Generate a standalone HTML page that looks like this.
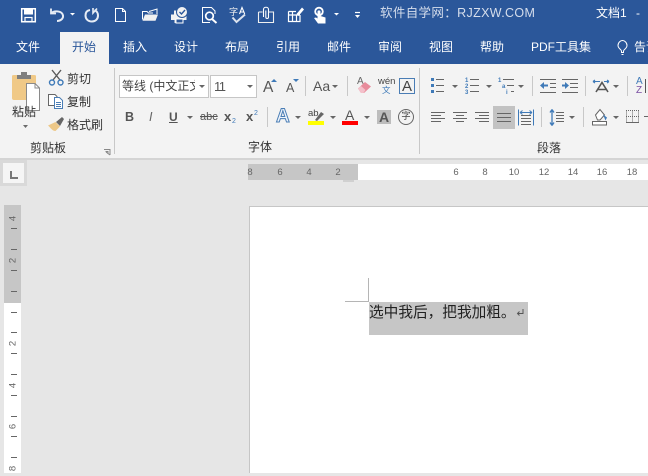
<!DOCTYPE html>
<html lang="zh"><head><meta charset="utf-8"><style>
html,body{margin:0;padding:0}
body{width:648px;height:473px;overflow:hidden;position:relative;background:#e6e6e6;font-family:"Liberation Sans","Noto Sans CJK SC",sans-serif}
.a{position:absolute}
.t{position:absolute;white-space:nowrap;line-height:1}
.tab{position:absolute;top:40px;font-size:12px;line-height:14px;color:#fff;white-space:nowrap}
.sep{position:absolute;width:1px;background:#c8c8c8}
.dd{position:absolute;border:3px solid transparent;border-top:3px solid #666;border-bottom:0}
svg{position:absolute;overflow:visible}
.rh{position:absolute;top:167px;font-size:9.500px;line-height:11px;color:#666;width:16px;text-align:center}
.rv{position:absolute;left:6px;font-size:9.500px;line-height:11px;color:#666;width:14px;text-align:center;transform:rotate(-90deg)}
.tk{position:absolute;left:11px;width:6px;height:1px;background:#666}
</style></head><body>
<div class="a" style="left:0;top:0;width:648px;height:64px;background:#2b579a"></div>
<div class="a" style="left:0;top:64px;width:648px;height:94px;background:#f3f3f3"></div>
<div class="a" style="left:0;top:158px;width:648px;height:2px;background:#d4d4d4"></div>
<div class="a" style="left:60px;top:32px;width:49px;height:32px;background:#f3f3f3"></div>

<!-- QAT -->
<svg style="left:0;top:0" width="365" height="30" viewBox="0 0 365 30" fill="none" stroke="#fff" stroke-width="1.500">
<path d="M21.700 8.700H35.300V21.700H21.700Z"/><path d="M24 8.500H33V14.500H24Z" fill="#fff" stroke="none"/><rect x="25" y="17.500" width="7" height="4" stroke-width="1.200"/>
<path d="M51 8.500V13.500H56" stroke-width="1.800" stroke="#e6ecf5"/><path d="M51.500 13C54 10.500 62 10.500 63 15.500C63.500 19 60 21 57 21" stroke-width="2" stroke="#e6ecf5"/>
<path d="M70 13H75L72.500 15.500Z" fill="#fff" stroke="none"/>
<path d="M90 10C86.500 10.500 85.500 13 85.500 15.500C85.500 19 88 21.500 92 21.500C95.500 21.500 98 19 98 15.500C98 13 96.500 11 94.500 10" stroke-width="2" stroke="#e6ecf5"/><path d="M93 8V13L97 8.500" stroke-width="1.600" stroke="#e6ecf5"/>
<path d="M115.500 8.500H122.500L125.500 11.500V21.500H115.500Z" stroke-width="1"/><path d="M122.500 8.500V11.500H125.500" stroke-width="1"/>
<path d="M142.500 19.500V11.500H147L148.500 13H153" stroke-width="1"/><path d="M142.500 20.800L145 14.500H158L155.500 20.800Z" fill="#f1f1f1" stroke="none"/><path d="M149 11.500L157 9V14" stroke-width="1"/>
<path d="M171 14.500H186.500V20H183.500V23H174.500V20H171Z" fill="#f2f2f2" stroke="none"/><rect x="176" y="19" width="7" height="4" fill="#2b579a" stroke="#fff" stroke-width="1"/><path d="M174 10.500H178V14.500H174Z" fill="#f2f2f2" stroke="none"/><circle cx="182" cy="12" r="5.500" fill="#f2f2f2" stroke="#2b579a" stroke-width="1"/><path d="M179.500 12L181.500 14L185 10" stroke="#2b579a" stroke-width="1.400"/>
<path d="M210 22.500H202.500V7.500H211.500L215 11V14" stroke-width="1"/><circle cx="209.500" cy="16" r="3.800" stroke-width="1.700"/><path d="M212 19L216.500 23" stroke-width="2"/>
<path d="M232.500 17.500L236.500 22L245 14.500" stroke-width="2" stroke="#dce3ee"/>
<path d="M239.500 14L242 7.500L244.700 14M240.500 12H243.500" stroke-width="1.100"/>
<path d="M258.500 12V22.500H273.500V12H269M258.500 12H262.500" stroke-width="1.100" stroke="#f0f0f0"/>
<path d="M263.500 17V9.500C263.500 6.500 268.500 6.500 268.500 9.500V17C268.500 19 265.800 19 265.800 17V10.500" stroke-width="1.100"/>
<path d="M288.500 11.500H296M288.500 11.500V21.500H300V15M292.500 11.500V21.500M296.500 15V21.500M288.500 15H300" stroke-width="1.200"/><path d="M296.500 14L302 7.500L304 9.500L298.500 16Z" fill="#fff" stroke="none"/>
<path d="M318 23.500L314 18L316 17.500L317.500 18.500V11.500C317.500 10 320.500 10 320.500 11.500V16L325.500 17.500V23.500Z" fill="#fff" stroke="none"/><circle cx="319" cy="11.500" r="3.800" stroke-width="1.800"/>
<path d="M334 13H339L336.500 15.500Z" fill="#fff" stroke="none"/>
<path d="M355 12.500H360" stroke-width="1.200"/><path d="M355 15H360L357.500 18Z" fill="#fff" stroke="none"/>
<text x="229" y="15" font-size="9" fill="#f0f0f0" stroke="none" font-family="'Liberation Sans','Noto Sans CJK SC',sans-serif">字</text>
</svg>

<div class="t" style="left:380px;top:6px;font-size:12.500px;line-height:15px;color:#d6deec;letter-spacing:.35px">软件自学网：RJZXW.COM</div>
<div class="t" style="left:596px;top:6px;font-size:12px;line-height:15px;color:#fff">文档1</div>
<div class="t" style="left:636px;top:6px;font-size:12px;line-height:15px;color:#fff">-</div>

<!-- Tabs -->
<div class="tab" style="left:16px">文件</div>
<div class="tab" style="left:72px;color:#2b579a">开始</div>
<div class="tab" style="left:123px">插入</div>
<div class="tab" style="left:174px">设计</div>
<div class="tab" style="left:225px">布局</div>
<div class="tab" style="left:276px">引用</div>
<div class="tab" style="left:327px">邮件</div>
<div class="tab" style="left:378px">审阅</div>
<div class="tab" style="left:429px">视图</div>
<div class="tab" style="left:480px">帮助</div>
<div class="tab" style="left:531px">PDF工具集</div>
<svg style="left:616px;top:40px" width="16" height="16" fill="none" stroke="#fff" stroke-width="1"><path d="M5.500 12.500V11C5.500 9.500 2 8.500 2 5.500C2 2.500 4.500 .5 6.500 .5C8.500 .5 11 2.500 11 5.500C11 8.500 7.500 9.500 7.500 11V12.500ZM5.500 14.500H7.500"/></svg>
<div class="tab" style="left:634px">告诉</div>

<!-- Clipboard group -->
<svg style="left:0;top:65px" width="115" height="95" fill="none">
<path d="M12 11Q12 10 14 10H34Q36 10 36 11V35H14Q12 35 12 33Z" fill="#f0c987"/>
<path d="M17 14V10H21V7H27V10H31V14Z" fill="#7f7f7f"/>
<path d="M26.500 18.500H35L39.500 23V45.500H26.500Z" fill="#fff" stroke="#8a8a8a"/><path d="M35 18.500V23H39.500" stroke="#8a8a8a"/>
<path d="M23 60H28L25.500 63Z" fill="#6a6a6a"/>
<path d="M52 5L60 15M61 5L53 15" stroke="#5a5a5a" stroke-width="1.400"/><circle cx="52" cy="17.500" r="2.500" stroke="#3f7ab8" stroke-width="1.400"/><circle cx="60.500" cy="17.500" r="2.500" stroke="#3f7ab8" stroke-width="1.400"/>
<path d="M48.500 40.500V29.500H55L57 31.500V40.500Z" fill="#fff" stroke="#666"/><path d="M54.500 32.500H59.500L62.500 35.500V43.500H54.500Z" fill="#fff" stroke="#4a7db5"/><path d="M56 37.500H61M56 39.500H61M56 41.500H61" stroke="#4a7db5"/>
<path d="M48 60.500L55.500 57L60 61.500L55.500 66C52 66 50 62 48 60.500Z" fill="#edc888"/><path d="M56 57L62 52L64 54L60 61Z" fill="#666"/>
<path d="M104 84.500H110V90M106 87L110 90M105.500 86.500H108V89" stroke="#888"/>
</svg>
<div class="t" style="left:12px;top:105px;font-size:12px;line-height:14px;color:#333">粘贴</div>
<div class="t" style="left:67px;top:72px;font-size:12px;line-height:14px;color:#333">剪切</div>
<div class="t" style="left:67px;top:95px;font-size:12px;line-height:14px;color:#333">复制</div>
<div class="t" style="left:67px;top:118px;font-size:12px;line-height:14px;color:#333">格式刷</div>
<div class="t" style="left:30px;top:141px;font-size:12px;line-height:14px;color:#333">剪贴板</div>
<div class="sep" style="left:114px;top:68px;height:86px"></div>

<!-- Font group -->
<div class="a" style="left:119px;top:75px;width:88px;height:21px;background:#fff;border:1px solid #c6c6c6"></div>
<div class="t" style="left:122px;top:79px;width:73px;overflow:hidden;font-size:12px;line-height:15px;color:#444">等线 (中文正文</div>
<div class="dd" style="left:199px;top:85px"></div>
<div class="a" style="left:210px;top:75px;width:45px;height:21px;background:#fff;border:1px solid #c6c6c6"></div>
<div class="t" style="left:214px;top:79px;font-size:13px;line-height:15px;color:#555;letter-spacing:-1.500px">11</div>
<div class="dd" style="left:247px;top:85px"></div>

<div class="t" style="left:263px;top:78px;font-size:15.500px;line-height:19px;color:#555">A</div>
<svg style="left:271px;top:79px" width="6" height="4"><path d="M0 3H6L3 0Z" fill="#3f7ab8"/></svg>
<div class="t" style="left:286px;top:80px;font-size:12.500px;line-height:16px;color:#555">A</div>
<svg style="left:293px;top:79px" width="6" height="4"><path d="M0 0H6L3 3Z" fill="#3f7ab8"/></svg>
<div class="sep" style="left:305px;top:76px;height:20px"></div>
<div class="t" style="left:313px;top:78px;font-size:14px;line-height:17px;color:#555">Aa</div>
<div class="dd" style="left:332px;top:85px"></div>
<div class="sep" style="left:347px;top:76px;height:20px"></div>

<div class="t" style="left:357px;top:76px;font-size:10px;line-height:12px;color:#666">A</div>
<svg style="left:357px;top:81px" width="16" height="13"><path d="M1 7.500L8 1L14 5.500L7 12H4Z" fill="#e88b9b"/><path d="M1 7.500L4 5L8.500 9L6.500 12H4Z" fill="#f4c0ca"/></svg>
<div class="t" style="left:378px;top:76px;font-size:9.500px;line-height:11px;color:#444">wén</div>
<div class="t" style="left:382px;top:86px;font-size:8.500px;line-height:9px;color:#3f7ab8">文</div>
<div class="a" style="left:399px;top:78px;width:14px;height:14px;border:1px solid #4a7db5;text-align:center;font-size:15px;line-height:15px;color:#444">A</div>
<div class="sep" style="left:419px;top:68px;height:86px"></div>

<div class="t" style="left:125px;top:110px;font-size:12.500px;font-weight:bold;line-height:14px;color:#555">B</div>
<div class="t" style="left:149px;top:110px;font-size:12.500px;font-style:italic;line-height:14px;color:#666">I</div>
<div class="t" style="left:169px;top:110px;font-size:12px;font-weight:bold;line-height:14px;color:#555;text-decoration:underline">U</div>
<div class="dd" style="left:187px;top:116px"></div>
<div class="t" style="left:200px;top:111px;font-size:11px;line-height:13px;color:#555;text-decoration:line-through">abc</div>
<div class="t" style="left:224px;top:110px;font-size:13px;font-weight:bold;line-height:14px;color:#555">x</div>
<div class="t" style="left:232px;top:118px;font-size:7px;line-height:8px;color:#3f7ab8">2</div>
<div class="t" style="left:246px;top:110px;font-size:13px;font-weight:bold;line-height:14px;color:#555">x</div>
<div class="t" style="left:254px;top:110px;font-size:7px;line-height:8px;color:#3f7ab8">2</div>
<div class="sep" style="left:267px;top:107px;height:20px"></div>

<div class="t" style="left:276px;top:107px;font-size:19px;font-weight:bold;line-height:20px;color:#eef4fb;-webkit-text-stroke:1px #4a7db5">A</div>
<div class="dd" style="left:295px;top:116px"></div>
<div class="t" style="left:308px;top:108px;font-size:9.500px;line-height:11px;color:#444">ab</div>
<svg style="left:315px;top:110px" width="10" height="11"><path d="M0 10L6 2L9 4L2 11Z" fill="#666"/></svg>
<div class="a" style="left:308px;top:121px;width:16px;height:4px;background:#ffff00"></div>
<div class="dd" style="left:330px;top:116px"></div>
<div class="t" style="left:345px;top:108px;font-size:14px;line-height:14px;color:#555">A</div>
<div class="a" style="left:342px;top:121px;width:16px;height:4px;background:#ff0000"></div>
<div class="dd" style="left:364px;top:116px"></div>
<div class="a" style="left:377px;top:110px;width:14px;height:14px;background:#bdbdbd;text-align:center;font-size:14px;line-height:15px;color:#555;font-weight:bold">A</div>
<div class="a" style="left:398px;top:109px;width:14px;height:14px;border:1px solid #666;border-radius:50%;text-align:center;font-size:9.500px;line-height:14px;color:#444">字</div>
<div class="t" style="left:248px;top:140px;font-size:12px;line-height:14px;color:#333">字体</div>

<!-- Paragraph group -->
<div class="a" style="left:493px;top:106px;width:22px;height:23px;background:#c2c2c2"></div>
<svg style="left:420px;top:65px" width="228" height="70" fill="none" stroke="#666" stroke-width="1">
<path d="M16 14.500H24M16 20.500H24M16 26.500H24"/>
<path d="M11 13H14V16H11ZM11 19H14V22H11ZM11 25H14V28H11Z" fill="#3f7ab8" stroke="none"/>
<path d="M50 14.500H59M50 20.500H59M50 26.500H59"/>
<text x="45" y="17" font-size="6" font-weight="bold" fill="#3f7ab8" stroke="none">1</text><text x="45" y="23" font-size="6" font-weight="bold" fill="#3f7ab8" stroke="none">2</text><text x="45" y="29" font-size="6" font-weight="bold" fill="#3f7ab8" stroke="none">3</text>
<path d="M83 14.500H94M87 20.500H94M91 26.500H94"/>
<text x="78" y="17" font-size="6" font-weight="bold" fill="#3f7ab8" stroke="none">1</text><text x="82" y="23" font-size="6" font-weight="bold" fill="#3f7ab8" stroke="none">a</text><text x="86" y="29" font-size="6" font-weight="bold" fill="#3f7ab8" stroke="none">i</text>
<path d="M120 14.500H136M130 18.500H136M130 22.500H136M120 27.500H136"/><path d="M120 20.500L124 17V24Z" fill="#3f7ab8" stroke="none"/><path d="M123 20.500H128" stroke="#3f7ab8" stroke-width="2"/>
<path d="M142 14.500H158M150 18.500H158M150 22.500H158M142 27.500H158"/><path d="M149 20.500L145 17V24Z" fill="#3f7ab8" stroke="none"/><path d="M142 20.500H146" stroke="#3f7ab8" stroke-width="2"/>
<path d="M176 27L182 17.500L188 27M178 24.500H186" stroke="#555" stroke-width="1.600"/><path d="M173 16.500H180M184 16.500H189M173 16.500L175 15M173 16.500L175 18M189 16.500L187 15M189 16.500L187 18" stroke="#3f7ab8" stroke-width="1.100"/>
<path d="M11 47.500H25M11 50.500H21M11 53.500H25M11 56.500H21M33 47.500H47M36 50.500H44M33 53.500H47M36 56.500H44M55 47.500H69M59 50.500H69M55 53.500H69M59 56.500H69"/>
<path d="M77 48.500H91M77 52.500H91M77 56.500H91"/>
<path d="M98.500 44.500V60.500M113.500 44.500V60.500" stroke="#3f7ab8"/><path d="M100 47.500H112M100 47.500L102.500 45.500M100 47.500L102.500 49.500M112 47.500L109.500 45.500M112 47.500L109.500 49.500" stroke="#3f7ab8"/>
<path d="M101 50.500H111M101 53.500H111M101 56.500H111M101 59.500H111"/>
<path d="M132 44.500V60.500M132 44.500L130 47.500M132 44.500L134 47.500M132 60.500L130 57.500M132 60.500L134 57.500" stroke="#3f7ab8" stroke-width="1.300"/>
<path d="M136 47.500H144M136 50.500H144M136 53.500H144M136 56.500H144"/>
<path d="M175.500 50L180 44.500L184.500 50L180 55H177.500Z" fill="#fff"/><path d="M183 49.500L187 52.500L185.500 55.500Z" fill="#3f7ab8" stroke="none"/>
<rect x="172.500" y="56.500" width="14" height="3.500" fill="#fff"/>
<path d="M206.500 45.500V56.500M212.500 45.500V56.500M218.500 45.500V56.500M206 45.500H219M206 51.500H219" stroke-dasharray="1 1"/><path d="M206 57.500H219"/>
</svg>

<div class="dd" style="left:452px;top:85px"></div>
<div class="dd" style="left:486px;top:85px"></div>
<div class="dd" style="left:518px;top:85px"></div>
<div class="sep" style="left:532px;top:76px;height:20px"></div>
<div class="sep" style="left:585px;top:76px;height:20px"></div>
<div class="dd" style="left:613px;top:85px"></div>
<div class="sep" style="left:627px;top:76px;height:20px"></div>
<div class="t" style="left:636px;top:77px;font-size:10px;line-height:10px;color:#3f7ab8">A</div>
<div class="t" style="left:636px;top:86px;font-size:10px;line-height:10px;color:#7a4fa3">Z</div>
<div class="a" style="left:645px;top:79px;width:1px;height:14px;background:#555"></div>
<div class="sep" style="left:541px;top:107px;height:20px"></div>
<div class="dd" style="left:569px;top:116px"></div>
<div class="sep" style="left:583px;top:107px;height:20px"></div>
<div class="dd" style="left:613px;top:116px"></div>
<div class="a" style="left:644px;top:116px;width:4px;height:1px;background:#666"></div>
<div class="t" style="left:537px;top:141px;font-size:12px;line-height:14px;color:#333">段落</div>

<!-- Ruler corner -->
<div class="a" style="left:0;top:160px;width:27px;height:26px;background:#d9d9d9"></div>
<div class="a" style="left:3px;top:163px;width:21px;height:20px;background:#f5f5f5"></div>
<div class="a" style="left:10px;top:171px;width:2px;height:8px;background:#777"></div>
<div class="a" style="left:10px;top:177px;width:8px;height:2px;background:#777"></div>

<!-- H ruler -->
<div class="a" style="left:248px;top:164px;width:110px;height:16px;background:#c6c6c6"></div>
<div class="a" style="left:358px;top:164px;width:290px;height:16px;background:#fff"></div>
<div class="a" style="left:343px;top:180px;width:11px;height:2px;background:#d0d0d0"></div>
<div class="rh" style="left:242px">8</div><div class="rh" style="left:272px">6</div><div class="rh" style="left:301px">4</div><div class="rh" style="left:330px">2</div>
<div class="rh" style="left:448px">6</div><div class="rh" style="left:477px">8</div><div class="rh" style="left:506px">10</div><div class="rh" style="left:536px">12</div><div class="rh" style="left:565px">14</div><div class="rh" style="left:594px">16</div><div class="rh" style="left:624px">18</div>

<!-- V ruler -->
<div class="a" style="left:4px;top:205px;width:17px;height:98px;background:#c6c6c6"></div>
<div class="a" style="left:4px;top:303px;width:17px;height:170px;background:#fff"></div>
<div class="rv" style="top:213px">4</div><div class="rv" style="top:255px">2</div><div class="rv" style="top:338px">2</div><div class="rv" style="top:380px">4</div><div class="rv" style="top:421px">6</div><div class="rv" style="top:463px">8</div>
<div class="tk" style="top:228px"></div><div class="tk" style="top:249px"></div><div class="tk" style="top:270px"></div><div class="tk" style="top:291px"></div><div class="tk" style="top:312px"></div><div class="tk" style="top:332px"></div><div class="tk" style="top:353px"></div><div class="tk" style="top:374px"></div><div class="tk" style="top:395px"></div><div class="tk" style="top:416px"></div><div class="tk" style="top:436px"></div><div class="tk" style="top:457px"></div>

<!-- Page -->
<div class="a" style="left:249px;top:206px;width:399px;height:267px;background:#fff;border-left:1px solid #c6c6c6;border-top:1px solid #c6c6c6;box-sizing:border-box"></div>
<div class="a" style="left:368px;top:278px;width:1px;height:24px;background:#b5b5b5"></div>
<div class="a" style="left:345px;top:301px;width:24px;height:1px;background:#b5b5b5"></div>
<div class="a" style="left:369px;top:302px;width:159px;height:33px;background:#c6c6c6"></div>
<div class="t" style="left:369px;top:304px;font-size:14.670px;line-height:18px;color:#222">选中我后，把我加粗。</div>
<svg style="left:516px;top:308px" width="10" height="10" fill="none" stroke="#555"><path d="M7 1V5.500H1.500M3.500 3.500L1.500 5.500L3.500 7.500"/></svg>
</body></html>
